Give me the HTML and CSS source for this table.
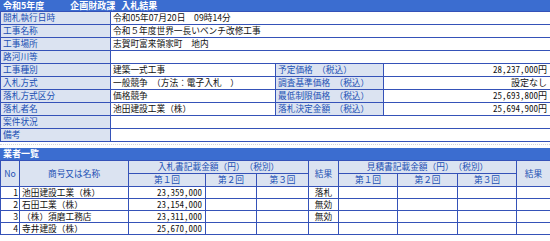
FILE: index.html
```html
<!DOCTYPE html>
<html lang="ja">
<head>
<meta charset="utf-8">
<title>入札結果</title>
<link rel="stylesheet" href="styles.css">
</head>
<body>
<div class="bar title"><span class="t1">令和5年度</span><span class="t2">企画財政課</span><span class="t3">入札結果</span></div>
<table class="info">
  <colgroup><col class="w1"><col class="w2"><col class="w3"><col class="w4"></colgroup>
  <tr><th>開札執行日時</th><td colspan="3">令和05年07月20日　09時14分</td></tr>
  <tr><th>工事名称</th><td colspan="3">令和５年度世界一長いベンチ改修工事</td></tr>
  <tr><th>工事場所</th><td colspan="3">志賀町富来領家町　地内</td></tr>
  <tr><th>路河川等</th><td colspan="3"></td></tr>
  <tr><th>工事種別</th><td>建築一式工事</td><th>予定価格　（税込）</th><td class="num">28,237,000円</td></tr>
  <tr><th>入札方式</th><td>一般競争　（方法：電子入札　）</td><th>調査基準価格　（税込）</th><td class="num">設定なし</td></tr>
  <tr><th>落札方式区分</th><td>価格競争</td><th>最低制限価格　（税込）</th><td class="num">25,693,800円</td></tr>
  <tr><th>落札者名</th><td>池田建設工業（株）</td><th>落札決定金額　（税込）</th><td class="num">25,694,900円</td></tr>
  <tr><th>案件状況</th><td colspan="3"></td></tr>
  <tr><th>備考</th><td colspan="3"></td></tr>
</table>
<div class="sep"></div>
<div class="bar sub">業者一覧</div>
<table class="list">
  <colgroup>
    <col class="l-no"><col class="l-name"><col class="l-b1"><col class="l-b2"><col class="l-b3"><col class="l-r1">
    <col class="l-e1"><col class="l-e2"><col class="l-e3"><col class="l-r2">
  </colgroup>
  <tr class="h1">
    <th rowspan="2">No</th><th rowspan="2">商号又は名称</th>
    <th colspan="3">入札書記載金額（円）　（税別）</th><th rowspan="2">結果</th>
    <th colspan="3">見積書記載金額（円）　（税別）</th><th rowspan="2">結果</th>
  </tr>
  <tr class="h2">
    <th>第１回</th><th>第２回</th><th>第３回</th>
    <th>第１回</th><th>第２回</th><th>第３回</th>
  </tr>
  <tr><td class="no">1</td><td>池田建設工業（株）</td><td class="num">23,359,000</td><td></td><td></td><td class="res">落札</td><td></td><td></td><td></td><td></td></tr>
  <tr><td class="no">2</td><td>石田工業（株）</td><td class="num">23,154,000</td><td></td><td></td><td class="res">無効</td><td></td><td></td><td></td><td></td></tr>
  <tr><td class="no">3</td><td>（株）須磨工務店</td><td class="num">23,311,000</td><td></td><td></td><td class="res">無効</td><td></td><td></td><td></td><td></td></tr>
  <tr><td class="no">4</td><td>寺井建設（株）</td><td class="num">25,670,000</td><td></td><td></td><td class="res"></td><td></td><td></td><td></td><td></td></tr>
</table>
</body>
</html>
```
FILE: styles.css
```css
html, body {
  margin: 0;
  padding: 0;
  background: #ffffff;
}
body {
  width: 550px;
  font-family: "Noto Sans CJK JP", "Noto Sans", sans-serif;
  font-size: 8.7px;
  color: #111;
}
.bar {
  background: #3b6dd0;
  color: #ffffff;
  font-weight: bold;
  height: 11px;
  line-height: 11px;
  padding-left: 3px;
  font-size: 9px;
}
.title .t2 { margin-left: 26px; }
.title .t3 { margin-left: 6px; }
table {
  border-collapse: collapse;
  width: 550px;
  table-layout: fixed;
}
th, td {
  border: 1px solid #3552b8;
  height: 12px;
  line-height: 12px;
  padding: 0 2px;
  white-space: nowrap;
  overflow: hidden;
  vertical-align: middle;
}
th {
  background: #dbe3f1;
  color: #2150b4;
  font-weight: normal;
  text-align: left;
}
.info .w1 { width: 110px; }
.info .w2 { width: 165px; }
.info .w3 { width: 108px; }
.info .w4 { width: 167px; }
.num {
  text-align: right;
  padding-right: 3px;
  font-family: "Noto Sans Mono CJK JP", "Noto Sans CJK JP", "DejaVu Sans Mono", monospace;
  font-size: 9px;
}
.sep {
  margin-top: 2px;
  height: 0;
  border-top: 1px dotted #d2d4dc;
  margin-bottom: 3px;
}
.sub {
  height: 12px;
  line-height: 12px;
}
.list .l-no { width: 19px; }
.list .l-name { width: 109px; }
.list .l-b1 { width: 77px; }
.list .l-b2 { width: 51px; }
.list .l-b3 { width: 52px; }
.list .l-r1 { width: 30px; }
.list .l-e1 { width: 59px; }
.list .l-e2 { width: 60px; }
.list .l-e3 { width: 59px; }
.list .l-r2 { width: 34px; }
.list th {
  text-align: center;
  padding: 0;
}
.list .h1 th, .list .h2 th { height: 12px; }
.list td { height: 11px; line-height: 11px; }
.list td.no {
  text-align: right;
  padding: 0 1px 0 0;
}
.list td.res { text-align: center; }
```
